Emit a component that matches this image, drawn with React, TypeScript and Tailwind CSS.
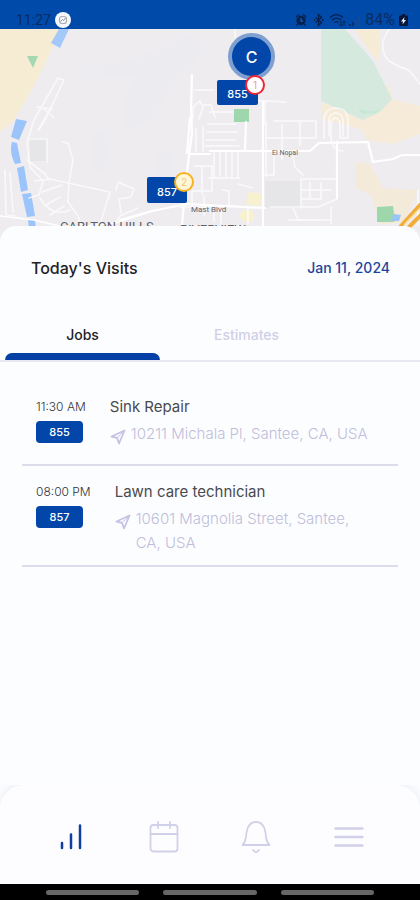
import { useState } from 'react';

type Visit = {
  time: string;
  code: string;
  title: string;
  address: string;
};

const visits: Visit[] = [
  { time: '11:30 AM', code: '855', title: 'Sink Repair', address: '10211 Michala Pl, Santee, CA, USA' },
  { time: '08:00 PM', code: '857', title: 'Lawn care technician', address: '10601 Magnolia Street, Santee, CA, USA' },
];

function StatusBar() {
  return (
    <header className="flex h-[29px] shrink-0 items-center justify-between bg-[#004aa9] pt-[10px] pl-4 pr-3 font-['Roboto',sans-serif] text-sm text-[#0b2c63]">
      <div className="flex items-center gap-1">
        <span>11:27</span>
        <svg width="16" height="16" viewBox="0 0 16 16" aria-hidden="true">
          <circle cx="8" cy="8" r="8" fill="#f4f7fb" />
          <rect x="4.500" y="4.500" width="7" height="7" rx="2.500" fill="none" stroke="#a9aeb5" strokeWidth="1.200" />
          <path d="M5.500 9.500l2-2 1 1 2-2.500" fill="none" stroke="#8f949b" />
        </svg>
      </div>
      <div className="flex items-center gap-1">
        <svg width="66" height="14" viewBox="0 0 66 14" aria-hidden="true" fill="none" stroke="#08224f" strokeWidth="1.300">
          <circle cx="6" cy="7.500" r="4" fill="#08224f" />
          <path d="M1 4l3-2.500M11 4L8 1.500M3 11l-1.500 1.500M9 11l1.500 1.500" />
          <path d="M6 5v3h2" stroke="#1d5cb5" />
          <path d="M20.500 4.500l6 5-3 3v-11l3 3-6 5" />
          <path d="M19 7h1M27 7h1.500" strokeWidth="2" />
          <path d="M35 4.500c4-3.500 9-3.500 13 0M37 7c3-2.500 6-2.500 9 0M39.500 9.500c1.500-1 3-1 4 0" />
          <path d="M46 8v5M44.500 11.500l1.500 1.500 1.500-1.500M49 13V8M47.500 9.500L49 8l1.500 1.500" strokeWidth="1" />
          <path d="M55 13v-2M58 13V9" />
          <path d="M61 13V6M64 13V3" stroke="#1a4a93" />
        </svg>
        <span className="text-base leading-5">84%</span>
        <svg width="9" height="12" viewBox="0 0 9 12" aria-hidden="true">
          <path d="M3 0h3v1.500h2q1 0 1 1V11q0 1-1 1H1q-1 0-1-1V2.500q0-1 1-1h2z" fill="#08183b" />
          <path d="M5.500 3L2 7.500h2L3.500 10.500 7 6H5z" fill="#e8effa" />
        </svg>
      </div>
    </header>
  );
}

function StreetMap() {
  return (
    <svg className="block h-full w-full" viewBox="0 29 420 215" preserveAspectRatio="xMidYMin slice" role="img" aria-label="Map of Santee">
      <rect y="29" width="420" height="215" fill="#efecf0" />
      {/* terrain */}
      <path d="M0 29h61L36 82 14 120 0 132z" fill="#f6ecd4" />
      <path d="M82 66q40-2 56-8t52-25l16 16-32 34-20 34-28 14-4-30 14-24-56 2z" fill="#e9eaee" opacity=".4" />
      <path d="M92 132l20-4-8 40-12 6zM156 154l16-6v28l-18 2z" fill="#ecebef" />
      <path d="M378 29v30l-6-4-18-26zM321 104v15l16 4 24 6 6 11 26 4 27-10V106l-26-6-7-16-15 24z" fill="#f5ebd8" />
      <path d="M355 29h24v32z" fill="#f6ebd4" />
      <path d="M321 29h24l28 32 19 38-12 13-17 8-20-9-22-10z" fill="#d5e9df" />
      <path d="M358 108q10 6 22 1l-4 4-14 1z" fill="#c8e8d6" />
      <path d="M356 162l14 2 13 24 35 2-14 32-24 3-8-29-16-8z" fill="#f4ead9" />
      <path d="M30 138h17v23H30zM265 181h36v27h-36z" fill="#e6e5e8" />
      <path d="M248 192l14 2-2 12-14-2zM243 210l10 1 1 10-10 1-5-6z" fill="#f7f1cf" />
      {/* parks and water */}
      <path d="M27 56h11l-5 12z" fill="#a4d8b0" />
      <path d="M234 109h15v13h-15zM377 207l16-1 2 15-2 1h-16z" fill="#9fd7ac" />
      <path d="M59 29h10l-9 19-9-5z" fill="#a5c8fb" />
      <path d="M16 119l11 2-8 19-8-3zM12 142l5 1 4 20-6 1q-6-12-3-22zM17 168l7-2 4 24-7 2zM22 194l9-1 4 23-8 1zM28 219l7 1 1 10h-7zM394 214l7 1-2 6h-8z" fill="#9bc4fb" />
      {/* streets */}
      <g fill="none" stroke="#fff" strokeLinejoin="round" strokeLinecap="round">
        <g strokeWidth="1.600" opacity=".7">
          <path d="M64 80l-6-2-24 42-7 22 3 25 13 14-4 14-10 3M64 80l-18 38-7 12M43 108l11 10M37 107l15 2M38 130l12-20" />
          <path d="M30 139h17v23M27 160l18 14 4 6M62 142l6 1 5 17-4 22-1 20 10 14 4 12M35 181l15-2 18 4 42 9-10 32M42 192l20-7M40 198q12 20 30 12M46 205l14-8M50 215l14-9M5 170l1 45 10 1M10 172l3 40M116 190l2-8 16 7-3 8-12 2 2 14M112 228l8-12 18-8" />
          <path d="M193 118v-11l7-6 3 6-4 12M203 105h8l4 12" />
          <path d="M389 29l-6 12q-2 12 6 20 12 7 20 9l11 14" />
          <path d="M324 138v-20q2-10 12-10t12 10v20h-8v-16q-5-8-9 0v14q0 14 12 15M329 136v-16q1-7 7-7t7 7v16" />
          <path d="M266 122v54M282 124v36M300 121v24M266 138h50M274 121h42v16M274 151v24h-12M292 152l3 15 8 8" />
          <path d="M210 112h23M208 124h28M207 132h30M206 140h30M205 146h34M214 151v26M220 151v25M226 151v26M232 151v26M238 151v26M208 178h32M196 129v23M203 127v24M194 166h18v25h-20v16M202 166v28" />
          <path d="M301 179h36v20l-19 8h-48M301 180v28M310 182v17M321 183v15M301 190h30M302 199h20M293 208l5 12h32M204 196v20M222 190l7 1v15h-20M238 184l14 4M248 206v18M180 207h34v14M221 210v14" />
          <path d="M235 29v8M214 90h-20M246 100l40 2M265 102v22M418 190v35M288 220h30M331 207v17" />
        </g>
        <g strokeWidth="2.200">
          <path d="M192 75l-1 34 1 24-3 22-4 34-3 37M120 220l32-9 35-7 78 4M210 151h100l9-8 49-1 5 20 20-3 9-4h18M263 102v126M246 122l-1 28M189 154h21M190 118l-3 35M337 142v56" />
          <path d="M0 216l34 4 34 8 48-5 36-12" strokeWidth="1.600" />
        </g>
      </g>
      <path d="M400 227l21-23M408 228l14-14" fill="none" stroke="#f2ad37" strokeWidth="4" />
      <path d="M404 225l17-18" fill="none" stroke="#fbdf9a" strokeWidth="1.500" />
      <g className="font-['Roboto',sans-serif]" fill="#606166">
        <text x="272" y="155" fontSize="7">El Nopal</text>
        <text x="191" y="212" fontSize="8">Mast Blvd</text>
        <text x="60" y="231" fontSize="13">CARLTON HILLS</text>
        <text x="180" y="234" fontSize="13">RIVERVIEW</text>
      </g>
    </svg>
  );
}

function NavArrow() {
  return (
    <svg className="mt-[7px] shrink-0" width="16" height="16" viewBox="0 0 16 16" fill="none" stroke="#c5c2e3" strokeWidth="1.800" strokeLinejoin="round" aria-hidden="true">
      <path d="M14.500 1.500L1.500 7.500l5.500 1.300 2 5.700z" />
      <path d="M7 8.800L14.500 1.500" strokeWidth="1" />
    </svg>
  );
}

function VisitRow({ visit }: { visit: Visit }) {
  return (
    <li className="flex min-h-[85px] items-start gap-5 border-b-2 border-[#dddcec] pt-4 pr-6 pb-[10px] pl-[14px]">
      <div className="shrink-0">
        <p className="text-xs leading-5 font-light text-[#333338]">{visit.time}</p>
        <span className="mt-1 flex h-[22px] w-[47px] items-center justify-center rounded bg-[#0146a8] text-[11px] font-medium text-white">
          {visit.code}
        </span>
      </div>
      <div className="min-w-0 flex-1 pl-1">
        <h2 className="text-[15px] leading-5 font-normal text-[#4a4a4e]">{visit.title}</h2>
        <div className="mt-[5px] flex items-start gap-[5px]">
          <NavArrow />
          <p className="text-[15px] leading-6 font-light text-[#bfbddb]">{visit.address}</p>
        </div>
      </div>
    </li>
  );
}

function BottomNav() {
  return (
    <nav className="grid h-[99px] grid-cols-4 items-center rounded-t-3xl bg-[#fdfdff] px-[25px] pt-1 shadow-[0_-3px_10px_rgba(60,60,110,0.07)]">
      <button className="flex justify-center" aria-label="Dashboard">
        <svg width="32" height="34" viewBox="0 0 32 34" fill="none" stroke="#123f9f" strokeWidth="2.500" strokeLinecap="round">
          <path d="M7 23v5M16 14.500V28M25 5.500V28" />
        </svg>
      </button>
      <button className="flex justify-center" aria-label="Calendar">
        <svg width="32" height="34" viewBox="0 0 32 34" fill="none" stroke="#d1d0e9" strokeWidth="1.800" strokeLinecap="round">
          <rect x="2.500" y="5" width="27" height="26.500" rx="3" />
          <path d="M2.500 14h27M10 2v6M22 2v6" />
        </svg>
      </button>
      <button className="flex justify-center" aria-label="Notifications">
        <svg width="32" height="34" viewBox="0 0 32 34" fill="none" stroke="#d1d0e9" strokeWidth="1.800" strokeLinecap="round" strokeLinejoin="round">
          <path d="M2.500 25q3-3 3.500-8 .3-5 1.500-8.500Q10 2 16 2t8.500 6.500Q25.700 12 26 17q.5 5 3.500 8z" />
          <path d="M13 30q3 4 6 0" />
        </svg>
      </button>
      <button className="flex justify-center" aria-label="Menu">
        <svg width="32" height="34" viewBox="0 0 32 34" fill="none" stroke="#d1d0e9" strokeWidth="2.400" strokeLinecap="round">
          <path d="M2.500 8.500h27M2.500 17h27M2.500 25.500h27" />
        </svg>
      </button>
    </nav>
  );
}

export default function App() {
  const [tab, setTab] = useState('Jobs');

  return (
    <div className="flex min-h-screen flex-col bg-[#fcfdff] font-['Inter',sans-serif]">
      <StatusBar />

      <section className="relative h-[215px] shrink-0 overflow-hidden">
        <StreetMap />
        {/* current user */}
        <div className="absolute top-[4px] left-[228px] flex size-[47px] items-center justify-center rounded-full border-4 border-[#7f9fd0] bg-[#0146a8] text-base font-medium text-white">
          C
        </div>
        <button className="absolute top-[51px] left-[217px] flex h-[25px] w-[41px] items-center justify-center rounded-xs bg-[#0146a8] pt-1 text-[11px] font-medium text-white">
          855
          <span className="absolute -top-[5px] -right-[7px] flex size-5 items-center justify-center rounded-full border-2 border-[#ee2436] bg-white text-[10px] font-normal text-[#f29aa4]">
            1
          </span>
        </button>
        <button className="absolute top-[148px] left-[147px] flex h-[26px] w-[40px] items-center justify-center rounded-xs bg-[#0146a8] pt-1 text-[11px] font-medium text-white">
          857
          <span className="absolute -top-[5px] -right-[7px] flex size-5 items-center justify-center rounded-full border-2 border-[#f5b324] bg-[#fff6d8] text-[10px] font-normal text-[#f1cb6d]">
            2
          </span>
        </button>
      </section>

      <main className="relative -mt-[18px] flex-1 rounded-t-2xl bg-[#fcfdff] pt-8">
        <div className="flex items-center justify-between pr-[30px] pl-[31px]">
          <h1 className="text-base leading-5 font-medium text-[#222225]">Today's Visits</h1>
          <time className="text-sm leading-5 font-medium text-[#1c459c]">Jan 11, 2024</time>
        </div>

        <div role="tablist" className="mt-[47px] flex border-b-2 border-[#e9e9f3] pl-[5px]">
          {['Jobs', 'Estimates'].map((name) => (
            <button
              key={name}
              role="tab"
              aria-selected={tab === name}
              onClick={() => setTab(name)}
              className={`flex w-[155px] flex-col items-center text-sm leading-5 font-medium even:ml-[9px] ${
                tab === name ? 'text-[#222225]' : 'text-[#d0cfe6]'
              }`}
            >
              {name}
              <span className={`mt-2 h-[7px] w-full rounded-t-lg ${tab === name ? 'bg-[#0540a6]' : ''}`} />
            </button>
          ))}
        </div>

        <ul className="mx-[22px] mt-[19px]">
          {visits.map((visit) => (
            <VisitRow key={visit.code} visit={visit} />
          ))}
        </ul>
      </main>

      <BottomNav />
      <footer className="flex h-4 shrink-0 items-center justify-center gap-6 bg-black px-[46px] pt-[1px]">
        <span className="h-[5px] flex-1 rounded-full bg-[#666]" />
        <span className="h-[5px] flex-1 rounded-full bg-[#666]" />
        <span className="h-[5px] flex-1 rounded-full bg-[#666]" />
      </footer>
    </div>
  );
}
